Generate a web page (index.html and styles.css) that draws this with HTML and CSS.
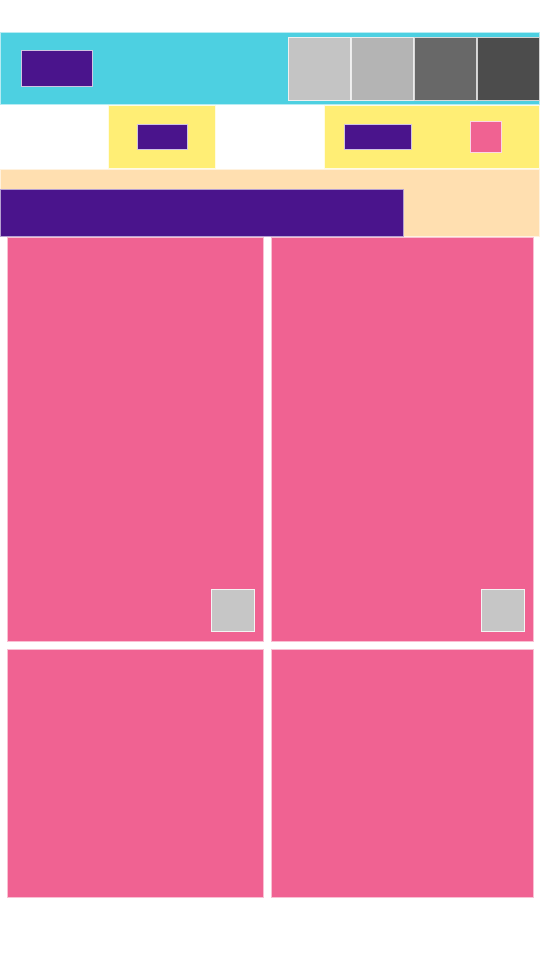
FILE: index.html
```html
<!DOCTYPE html>
<html lang="en">
<head>
<meta charset="utf-8">
<title>Layout</title>
<link rel="stylesheet" href="styles.css">
</head>
<body>
  <header class="topbar">
    <div class="btn btn-main"></div>
    <div class="swatches">
      <div class="swatch s1"></div>
      <div class="swatch s2"></div>
      <div class="swatch s3"></div>
      <div class="swatch s4"></div>
    </div>
  </header>
  <section class="toolbar">
    <div class="cell"></div>
    <div class="cell yellow center">
      <div class="chip chip-small"></div>
    </div>
    <div class="cell"></div>
    <div class="cell yellow wide row">
      <div class="chip chip-wide"></div>
      <div class="pink-sq"></div>
    </div>
  </section>
  <section class="banner">
    <div class="banner-bar"></div>
  </section>
  <main class="cards">
    <div class="card tall"><div class="thumb"></div></div>
    <div class="card tall"><div class="thumb"></div></div>
    <div class="card short"></div>
    <div class="card short"></div>
  </main>
</body>
</html>
```
FILE: styles.css
```css
* { box-sizing: border-box; }
html, body { margin: 0; padding: 0; background: #ffffff; }
body { width: 540px; font-family: "Liberation Sans", Arial, sans-serif; }

.topbar {
  margin-top: 32px;
  height: 73px;
  background: #4dd0e1;
  border: 1px solid rgba(255,255,255,0.6);
  display: flex;
  align-items: center;
  justify-content: space-between;
  padding-left: 20px;
}
.btn-main {
  width: 72px;
  height: 37px;
  background: #4a148c;
  border: 1px solid rgba(255,255,255,0.75);
}
.swatches { display: flex; height: 64px; margin-right: -1px; }
.swatch { width: 63px; height: 64px; border: 1px solid rgba(255,255,255,0.75); }
.s1 { background: #c4c4c4; }
.s2 { background: #b4b4b4; }
.s3 { background: #686868; }
.s4 { background: #4c4c4c; }

.toolbar {
  display: grid;
  grid-template-columns: 108px 108px 108px 216px;
  height: 64px;
}
.cell { border: 1px solid transparent; }
.yellow { background: #ffee75; border: 1px solid rgba(255,255,255,0.8); }
.center { display: flex; align-items: center; justify-content: center; }
.row { display: flex; align-items: center; padding-left: 19px; }
.chip {
  background: #4a148c;
  border: 1px solid rgba(255,255,255,0.75);
  height: 26px;
}
.chip-small { width: 51px; }
.chip-wide { width: 68px; }
.pink-sq {
  width: 32px;
  height: 32px;
  margin-left: 58px;
  background: #f06292;
  border: 1px solid rgba(255,255,255,0.75);
}

.banner {
  height: 68px;
  background: #ffdfb0;
  border: 1px solid rgba(255,255,255,0.6);
  display: flex;
  flex-direction: column;
  justify-content: flex-end;
}
.banner-bar {
  width: 75%;
  height: 48px;
  background: #4a148c;
  border: 1px solid rgba(255,255,255,0.6);
  margin-bottom: -1px;
  margin-left: -1px;
}

.cards {
  display: grid;
  grid-template-columns: 257px 263px;
  column-gap: 7px;
  row-gap: 7px;
  padding: 0 7px;
}
.card {
  background: #f06292;
  border: 1px solid rgba(255,255,255,0.6);
  display: flex;
  align-items: flex-end;
  justify-content: flex-end;
  padding: 0 8px 9px 0;
}
.tall { height: 405px; }
.short { height: 249px; }
.thumb {
  width: 44px;
  height: 43px;
  background: #c6c6c6;
  border: 1px solid rgba(255,255,255,0.8);
}
```
